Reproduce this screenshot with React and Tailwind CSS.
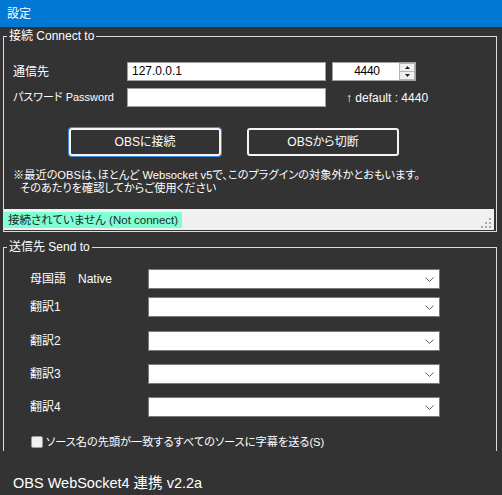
export default function App() {
  const Chevron = () => (
    <svg width="9" height="5" viewBox="0 0 9 5" className="block">
      <path d="M0.5 0.5 L4.5 4.5 L8.5 0.5" stroke="#606060" strokeWidth="1" fill="none" />
    </svg>
  );
  const SelectRow = ({ label, className }) => (
    <div className={"flex items-center h-[20px] " + className}>
      <div className="pl-[26px] w-[144px] whitespace-pre">{label}</div>
      <div className="w-[292px] h-[20px] bg-white border border-[#7a7a7a] flex items-center justify-end pr-[5px]">
        <Chevron />
      </div>
    </div>
  );
  return (
    <div className="w-[502px] h-[495px] bg-[#333333] overflow-hidden text-white font-['Liberation_Sans','Noto_Sans_CJK_JP',sans-serif] text-[12px] [font-feature-settings:'palt']">
      <div className="h-[27px] bg-[#0078d4] flex items-center pl-[7px] text-[12px]">設定</div>

      <fieldset className="ml-[3px] w-[494px] border border-[#dcdcdc] pb-[1px]">
        <legend className="ml-[3px] px-[2px] leading-[18px] text-[12px]">接続 Connect to</legend>
        <div className="pt-[17px]">
          <div className="flex items-center h-[19px]">
            <div className="pl-[9px] w-[123px]">通信先</div>
            <div className="w-[199px] h-[19px] bg-white border border-[#a0a0a0] text-black pl-[4px] leading-[17px]">127.0.0.1</div>
            <div className="ml-[6px] w-[84px] h-[19px] bg-white border border-[#a0a0a0] flex">
              <div className="flex-1 text-black text-center leading-[17px] pl-[2px] tracking-[-0.3px]">4440</div>
              <div className="w-[16px] flex flex-col">
                <div className="flex-1 bg-[#f0f0f0] border border-[#b5b5b5] flex items-center justify-center">
                  <svg width="5" height="3" viewBox="0 0 5 3"><path d="M2.5 0 L5 3 L0 3 Z" fill="#222" /></svg>
                </div>
                <div className="flex-1 bg-[#f0f0f0] border border-t-0 border-[#b5b5b5] flex items-center justify-center">
                  <svg width="5" height="3" viewBox="0 0 5 3"><path d="M0 0 L5 0 L2.5 3 Z" fill="#222" /></svg>
                </div>
              </div>
            </div>
          </div>
          <div className="flex items-center h-[19px] mt-[7px]">
            <div className="pl-[9px] w-[123px] text-[11px] whitespace-nowrap">パスワード Password</div>
            <div className="w-[199px] h-[19px] bg-white border border-[#a0a0a0]"></div>
            <div className="ml-[20px]">↑ default : 4440</div>
          </div>
          <div className="flex mt-[21px] pl-[65px] gap-[26px]">
            <div className="w-[152px] h-[28px] border-2 border-[#f4f4f4] rounded-[3px] ring-1 ring-[#3d8ee0] flex items-center justify-center">OBSに接続</div>
            <div className="w-[152px] h-[28px] border-2 border-[#f4f4f4] rounded-[3px] flex items-center justify-center">OBSから切断</div>
          </div>
          <div className="mt-[13px] leading-[13px] text-[11.2px] whitespace-nowrap">
            <div className="pl-[9px]">※最近のOBSは、ほとんど Websocket v5で、このプラグインの対象外かとおもいます。</div>
            <div className="pl-[16px]">そのあたりを確認してからご使用ください</div>
          </div>
          <div className="mt-[14px] mr-[2px] h-[21px] bg-[#f0f0f0] flex items-center">
            <div className="bg-[#7fffd4] h-[16px] leading-[16px] pl-[4px] pr-[4px] whitespace-nowrap text-[11.5px] text-[#1e2a26]">接続されていません (Not connect)</div>
            <svg width="11" height="11" viewBox="0 0 11 11" className="ml-auto mr-[2px] self-end mb-[1px]">
              <rect x="8" y="0" width="2" height="2" fill="#a8a8a8" />
              <rect x="4" y="4" width="2" height="2" fill="#a8a8a8" />
              <rect x="8" y="4" width="2" height="2" fill="#a8a8a8" />
              <rect x="0" y="8" width="2" height="2" fill="#a8a8a8" />
              <rect x="4" y="8" width="2" height="2" fill="#a8a8a8" />
              <rect x="8" y="8" width="2" height="2" fill="#a8a8a8" />
            </svg>
          </div>
        </div>
      </fieldset>

      <fieldset className="mt-[6px] ml-[3px] w-[494px] border-x border-t border-[#dcdcdc] pb-[3px]">
        <legend className="ml-[3px] px-[2px] leading-[18px] text-[12px]">送信先 Send to</legend>
        <div className="pt-[13px]">
          <SelectRow label={"母国語　Native"} className="" />
          <SelectRow label="翻訳1" className="mt-[8px]" />
          <SelectRow label="翻訳2" className="mt-[14px]" />
          <SelectRow label="翻訳3" className="mt-[13px]" />
          <SelectRow label="翻訳4" className="mt-[13px]" />
          <div className="flex items-center h-[12px] mt-[19px] pl-[27px]">
            <div className="w-[12px] h-[12px] bg-[#f0f0f0] border border-[#9a9a9a] rounded-[2px]"></div>
            <div className="ml-[3px] text-[11.2px] whitespace-nowrap">ソース名の先頭が一致するすべてのソースに字幕を送る(S)</div>
          </div>
        </div>
      </fieldset>

      <div className="mt-[22px] pl-[13px] text-[14.5px] leading-[20px]">OBS WebSocket4 連携 v2.2a</div>
    </div>
  );
}
